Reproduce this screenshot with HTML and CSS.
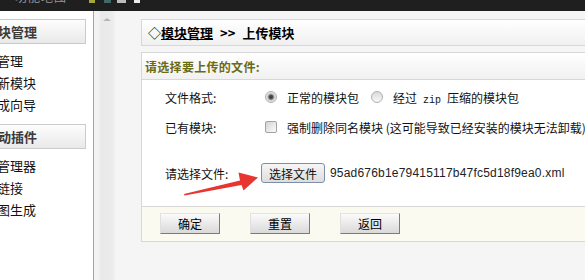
FILE: index.html
```
<!DOCTYPE html>
<html lang="zh-CN">
<head>
<meta charset="utf-8">
<title>上传模块</title>
<link rel="stylesheet" href="styles.css">
</head>
<body>
<div class="topbar">
  <span class="top-title">功能地图</span>
  <span class="top-icons">
    <i class="ti ti-a"></i><i class="ti ti-b"></i><i class="ti ti-c"></i><i class="ti ti-d"></i>
  </span>
</div>
<div class="layout">
  <aside class="sidebar">
    <div class="side-head">块管理</div>
    <ul class="side-list">
      <li>管理</li>
      <li>新模块</li>
      <li>成向导</li>
    </ul>
    <div class="side-head">动插件</div>
    <ul class="side-list">
      <li>管理器</li>
      <li>链接</li>
      <li>图生成</li>
    </ul>
  </aside>
  <div class="strip"><span class="strip-arrow"></span></div>
  <main class="main">
    <div class="crumb"><span class="diamond">◇</span><a class="crumb-link">模块管理</a><span class="sep">&gt;&gt;</span><span>上传模块</span></div>
    <section class="form">
      <div class="form-title">请选择要上传的文件:</div>
      <div class="form-body">
        <div class="row">
          <span class="label">文件格式:</span>
          <span class="ctrl">
            <span class="radio on"></span><span class="opt">正常的模块包</span>
            <span class="radio"></span><span class="opt">经过<span class="mono"> zip </span>压缩的模块包</span>
          </span>
        </div>
        <div class="row">
          <span class="label">已有模块:</span>
          <span class="ctrl">
            <span class="check"></span><span class="opt">强制删除同名模块 (这可能导致已经安装的模块无法卸载)</span>
          </span>
        </div>
        <div class="row row-file">
          <span class="label">请选择文件:</span>
          <span class="ctrl">
            <span class="file-btn">选择文件</span><span class="file-name">95ad676b1e79415117b47fc5d18f9ea0.xml</span>
          </span>
        </div>
      </div>
      <div class="form-foot">
        <span class="btn">确定</span>
        <span class="btn">重置</span>
        <span class="btn">返回</span>
      </div>
    </section>
  </main>
</div>
<svg class="arrow" width="80" height="32" viewBox="180 166 80 32">
  <polygon points="184,194 240,180.5 238.5,172.5 258,177.5 243.5,190.5 241.5,185 184.5,195.5" fill="#e8352f"/>
</svg>
</body>
</html>
```
FILE: styles.css
```
* { box-sizing: border-box; }
html, body { margin: 0; padding: 0; }
body {
  width: 585px;
  height: 280px;
  overflow: hidden;
  background: #f5f5f5;
  font-family: "Noto Sans CJK SC", "Liberation Sans", sans-serif;
  font-size: 12px;
  color: #000;
  position: relative;
}
.topbar {
  height: 11px;
  background: #1f1f1f;
  display: flex;
  overflow: hidden;
}
.top-title {
  margin: -10px 0 0 15px;
  font-size: 12px;
  line-height: 14px;
  color: #9a9a9a;
  letter-spacing: 1px;
}
.top-icons { display: flex; margin-left: 20px; }
.ti { display: block; height: 3px; }
.ti-a { width: 6px; background: #a4a83a; margin-left: 2px; }
.ti-b { width: 7px; background: #3f6a66; margin-left: 9px; }
.ti-c { width: 9px; background: #bdbdbd; margin-left: 6px; }
.ti-d { width: 6px; background: #ececec; margin-left: 8px; }

.layout { display: flex; height: 269px; }
.sidebar {
  width: 94px;
  flex: none;
  background: #fff;
  border-right: 1px solid #a3a3a3;
  overflow: hidden;
  padding-top: 8px;
}
.side-head {
  height: 25px;
  margin: 0 7px 0 -4px;
  border: 1px solid #cbcbcb;
  background: linear-gradient(#fdfdfd, #e9e9e9);
  font-weight: bold;
  font-size: 13px;
  color: #3a3a3a;
  line-height: 23px;
  padding-left: 1px;
}
.side-list {
  list-style: none;
  margin: 0 0 8px -3px;
  padding: 6px 0 0;
}
.side-list li {
  height: 22px;
  line-height: 22px;
  font-size: 13px;
  color: #111;
  white-space: nowrap;
}
.strip {
  width: 21px;
  flex: none;
  background: linear-gradient(to right, #f4f4f4 0, #f1f1f1 5px, #e9e9e9 7px, #ebebeb 17px, #f1f1f1 21px);
  padding: 7px 0 0 9px;
}
.strip-arrow {
  display: block;
  width: 0;
  height: 0;
  border-left: 4px solid transparent;
  border-right: 4px solid transparent;
  border-bottom: 3px solid #b4b4b4;
}
.main {
  flex: 1;
  min-width: 0;
  padding: 8px 0 0 26px;
  overflow: hidden;
}
.crumb {
  height: 27px;
  border: 1px solid #d7d7d7;
  border-right: none;
  background: linear-gradient(#ffffff, #f0f0f0);
  display: flex;
  align-items: center;
  padding-left: 6px;
  font-size: 13px;
  font-weight: bold;
  white-space: nowrap;
}
.diamond { font-weight: normal; }
.crumb-link { color: #000; text-decoration: underline; }
.sep { margin: 0 7px 0 7px; }
.form {
  margin-top: 6px;
  border: 1px solid #d7d7d7;
  border-right: none;
  background: #fff;
}
.form-title {
  height: 27px;
  border-bottom: 1px solid #d7d7d7;
  background: linear-gradient(#ffffff, #f1f1f1);
  color: #6b6b14;
  font-weight: bold;
  font-size: 12px;
  letter-spacing: 0.3px;
  padding-left: 3px;
  display: flex;
  align-items: center;
}
.form-body {
  padding: 3px 0 19px;
  display: flex;
  flex-direction: column;
  gap: 2px;
}
.row {
  height: 28px;
  display: flex;
  align-items: center;
  white-space: nowrap;
}
.row-file { margin-top: 16px; }
.label {
  width: 123px;
  flex: none;
  padding-left: 23px;
  font-size: 12px;
  color: #111;
}
.ctrl { display: flex; align-items: center; }
.opt { margin-left: 10px; margin-right: 12px; font-size: 12px; color: #111; }
.mono { font-family: "Liberation Mono", monospace; font-size: 10px; }
.radio {
  width: 12px;
  height: 12px;
  border-radius: 50%;
  border: 1px solid #b0b0b0;
  background: linear-gradient(#d9d9d9, #f8f8f8);
  flex: none;
}
.radio.on {
  background: radial-gradient(circle at center, #3c3c3c 0, #4a4a4a 1.6px, #9c9c9c 2.8px, #d8d8d8 3.8px, #f2f2f2 6px);
}
.check {
  width: 12px;
  height: 12px;
  border: 1px solid #a2a2a2;
  border-radius: 2px;
  background: linear-gradient(135deg, #d4d4d4, #fbfbfb);
  flex: none;
}
.file-btn {
  margin-left: -4px;
  width: 64px;
  height: 20px;
  border: 1px solid #7d8fa8;
  border-radius: 3px;
  background: linear-gradient(#f6f6f6, #dddddd);
  display: flex;
  align-items: center;
  justify-content: center;
  font-size: 12px;
  color: #111;
}
.file-name {
  margin-left: 5px;
  font-family: "Liberation Sans", sans-serif;
  font-size: 12px;
  letter-spacing: 0.2px;
  color: #222;
}
.form-foot {
  border-top: 1px solid #d7d7d7;
  background: #fafaf1;
  height: 35px;
  padding: 6px 0 0 18px;
  display: flex;
  gap: 30px;
}
.btn {
  width: 60px;
  height: 21px;
  border: 1px solid;
  border-color: #e4e4e4 #7c7c7c #7c7c7c #e0e0e0;
  background: linear-gradient(#fbfbfb, #d9d9d9);
  display: flex;
  align-items: center;
  justify-content: center;
  font-size: 12px;
  color: #000;
}
.arrow {
  position: absolute;
  left: 180px;
  top: 166px;
}
```
